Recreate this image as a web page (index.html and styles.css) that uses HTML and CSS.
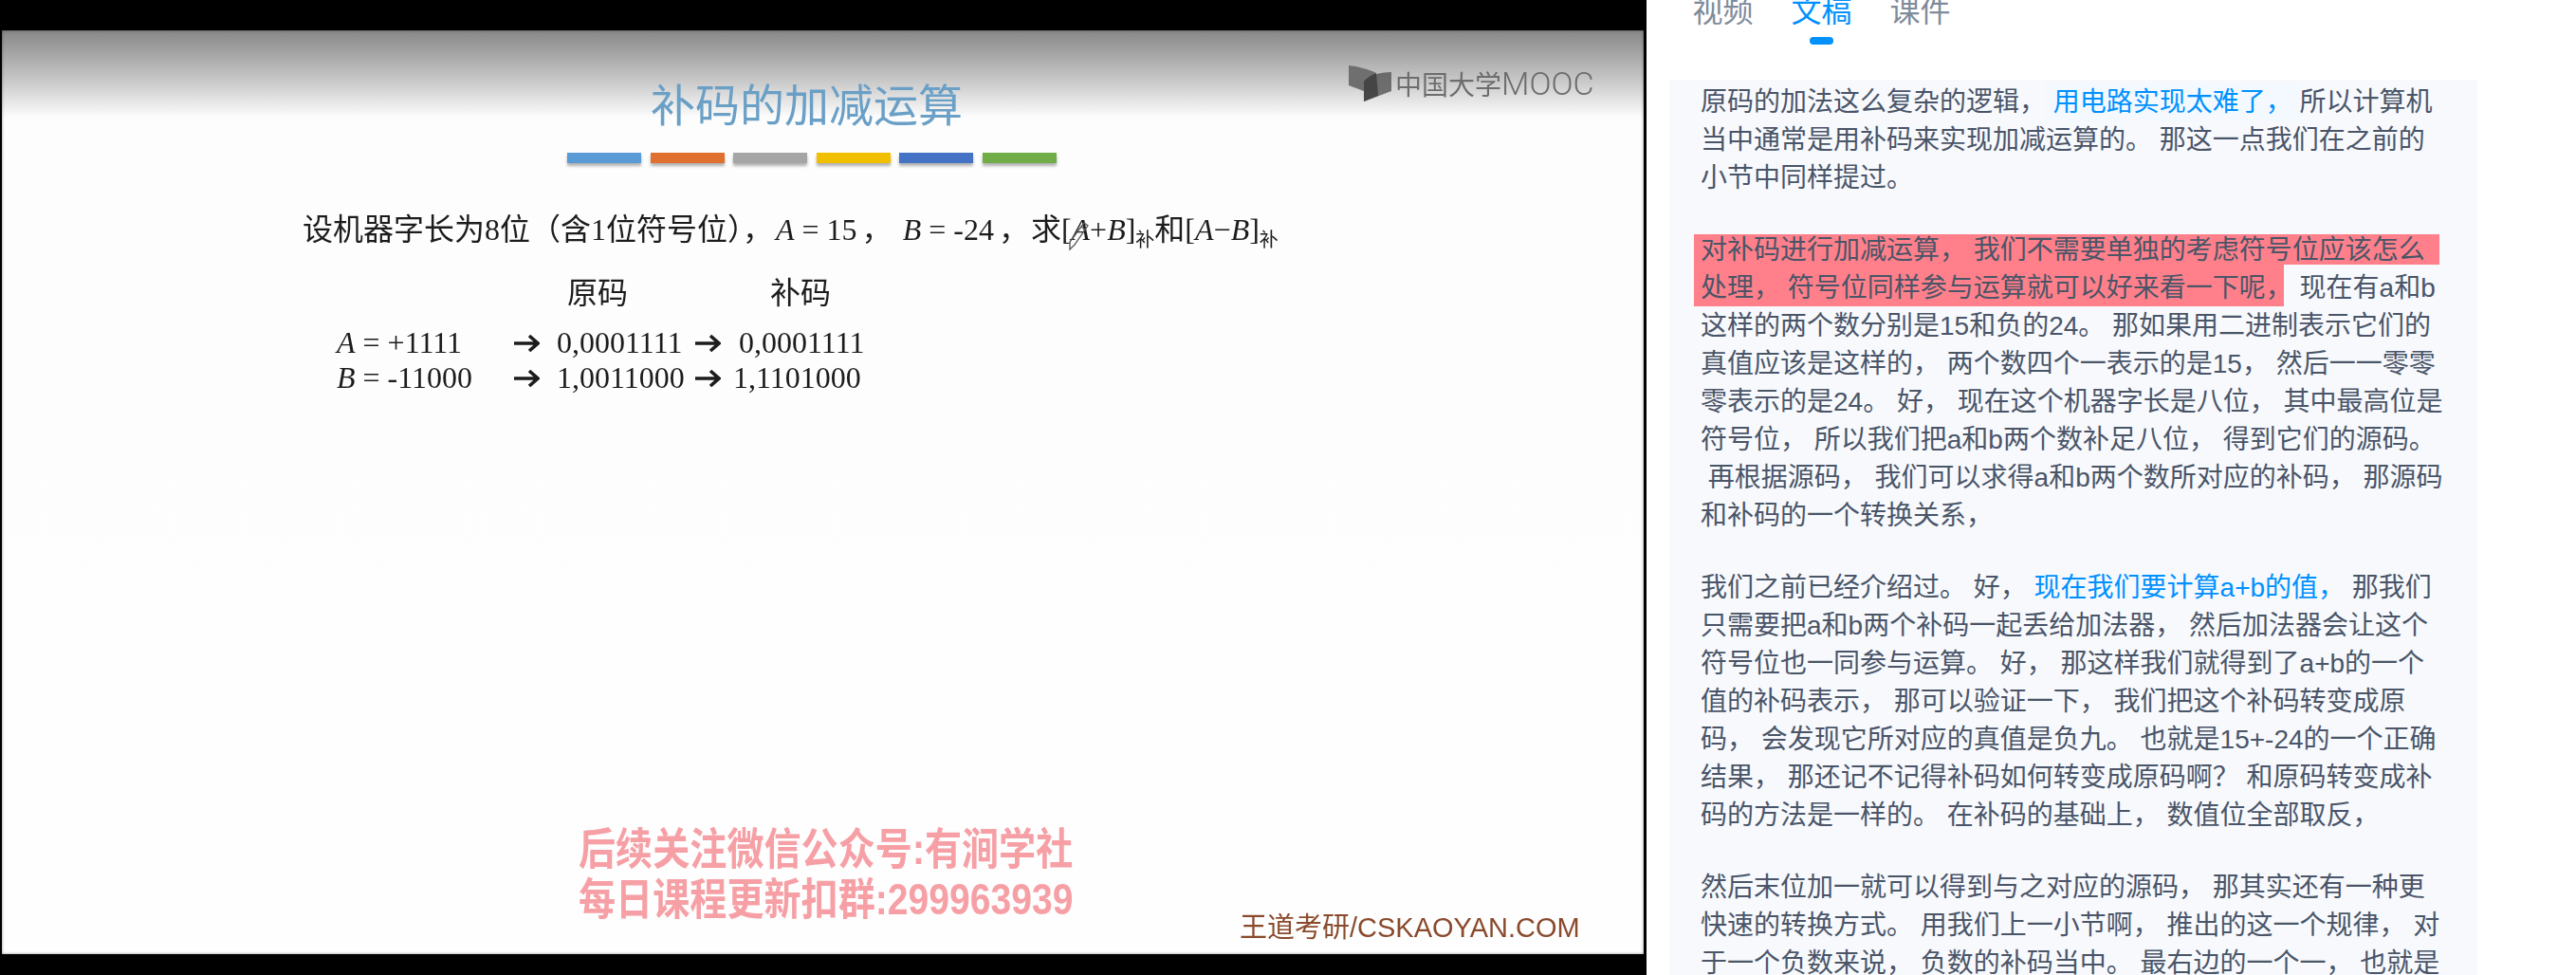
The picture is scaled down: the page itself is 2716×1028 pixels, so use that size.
FILE: index.html
```html
<!DOCTYPE html>
<html lang="zh-CN">
<head>
    <meta charset="UTF-8">
    <meta name="viewport" content="width=device-width, initial-scale=1.0">
    <title>补码的加减运算</title>
    <link rel="stylesheet" href="styles.css">
</head>
<body>
    <div class="page">
        <div class="player">
            <div class="slide">
                <div class="logo">
                    <svg class="logo-icon" width="46" height="38" viewBox="0 0 46 38">
                        <path d="M0 0C10 1 21 4 29 8L31 30L16 27L0 21Z" fill="#6f6f6f"/>
                        <path d="M45 7V27L16 38V17C21 11 32 7 45 7Z" fill="#5c5c5c" fill-opacity="0.85"/>
                        <path d="M16 17C19 13 24 10 29 8L31 32L16 38Z" fill="#3f3f3f" fill-opacity="0.8"/>
                    </svg>
                    <span class="logo-cn">中国大学</span><span class="logo-en">MOOC</span>
                </div>

                <h1 class="slide-title">补码的加减运算</h1>
                <div class="color-bars">
                    <span class="bar bar-blue"></span>
                    <span class="bar bar-orange"></span>
                    <span class="bar bar-gray"></span>
                    <span class="bar bar-yellow"></span>
                    <span class="bar bar-navy"></span>
                    <span class="bar bar-green"></span>
                </div>

                <p class="question">设机器字长为8位（含1位符号位），<i class="var-a">A</i> = 15<span class="comma-a">，</span><i>B</i> = -24<span class="comma-b">，</span>求[<i>A</i>+<i>B</i>]<sub>补</sub>和[<i>A</i>−<i>B</i>]<sub>补</sub></p>

                <div class="code-head">
                    <span class="head-yuan">原码</span>
                    <span class="head-bu">补码</span>
                </div>
                <div class="code-grid">
                    <span><i>A</i> = +1111</span>
                    <svg class="arrow" width="28" height="20" viewBox="0 0 28 20"><path d="M1 10H26M17 2L26 10L17 18"/></svg>
                    <span>0,0001111</span>
                    <svg class="arrow" width="28" height="20" viewBox="0 0 28 20"><path d="M1 10H26M17 2L26 10L17 18"/></svg>
                    <span>0,0001111</span>
                    <span><i>B</i> = -11000</span>
                    <svg class="arrow" width="28" height="20" viewBox="0 0 28 20"><path d="M1 10H26M17 2L26 10L17 18"/></svg>
                    <span>1,0011000</span>
                    <svg class="arrow" width="28" height="20" viewBox="0 0 28 20"><path d="M1 10H26M17 2L26 10L17 18"/></svg>
                    <span class="tight">1,1101000</span>
                </div>

                <svg class="pen" width="24" height="32" viewBox="0 0 24 32">
                    <path d="M18 2L22 5L8 25L3 30L3 22Z" fill="none" stroke="#555" stroke-width="1.3"/>
                    <path d="M15 6L19 9" stroke="#555" stroke-width="1.2"/>
                </svg>

                <div class="notice">
                    <div>后续关注微信公众号:有涧学社</div>
                    <div>每日课程更新扣群:<span class="notice-num">299963939</span></div>
                </div>
                <div class="site-mark">王道考研/CSKAOYAN.COM</div>
            </div>
        </div>

        <div class="side">
            <div class="tabs">
                <div class="tab">视频</div>
                <div class="tab active">文稿</div>
                <div class="tab">课件</div>
            </div>

            <div class="transcript">
                <p>原码的加法这么复杂的逻辑， <span class="mark-blue">用电路实现太难了，</span> 所以计算机<br>
                当中通常是用补码来实现加减运算的。 那这一点我们在之前的<br>
                小节中同样提过。</p>

                <p><span class="mark-red first">对补码进行加减运算， 我们不需要单独的考虑符号位应该怎么</span><br>
                <span class="mark-red second">处理， 符号位同样参与运算就可以好来看一下呢，</span> 现在有a和b<br>
                这样的两个数分别是15和负的24。 那如果用二进制表示它们的<br>
                真值应该是这样的， 两个数四个一表示的是15， 然后一一零零<br>
                零表示的是24。 好， 现在这个机器字长是八位， 其中最高位是<br>
                符号位， 所以我们把a和b两个数补足八位， 得到它们的源码。<br>
                &nbsp;再根据源码， 我们可以求得a和b两个数所对应的补码， 那源码<br>
                和补码的一个转换关系，</p>

                <p>我们之前已经介绍过。 好， <span class="link-blue">现在我们要计算a+b的值，</span> 那我们<br>
                只需要把a和b两个补码一起丢给加法器， 然后加法器会让这个<br>
                符号位也一同参与运算。 好， 那这样我们就得到了a+b的一个<br>
                值的补码表示， 那可以验证一下， 我们把这个补码转变成原<br>
                码， 会发现它所对应的真值是负九。 也就是15+-24的一个正确<br>
                结果， 那还记不记得补码如何转变成原码啊？ 和原码转变成补<br>
                码的方法是一样的。 在补码的基础上， 数值位全部取反，</p>

                <p>然后末位加一就可以得到与之对应的源码， 那其实还有一种更<br>
                快速的转换方式。 用我们上一小节啊， 推出的这一个规律， 对<br>
                于一个负数来说， 负数的补码当中。 最右边的一个一， 也就是</p>
            </div>
        </div>
    </div>
</body>
</html>
```

FILE: styles.css
```css
* {
    margin: 0;
    padding: 0;
    box-sizing: border-box;
}

html, body {
    height: 100%;
    overflow: hidden;
}

body {
    font-family: "Liberation Sans", "Noto Sans CJK SC", sans-serif;
    background-color: white;
}

.page {
    display: flex;
    height: 1028px;
}

/* video frame */
.player {
    width: 1736px;
    flex-shrink: 0;
    background-color: black;
    padding: 32px 3px 22px 2px;
}

.slide {
    position: relative;
    height: 100%;
    overflow: hidden;
    background: linear-gradient(#888888 0, #c4c4c4 50px, #fdfdfd 92px, #fefefe 100%);
    box-shadow: inset 0 0 3px rgba(0, 0, 0, 0.5);
    padding-top: 45px;
    font-family: "Liberation Serif", "Noto Sans CJK SC", serif;
    color: #1c1c1c;
}

.slide-title {
    margin-left: 684px;
    font-family: "Noto Sans CJK SC", sans-serif;
    font-size: 47px;
    line-height: 62px;
    font-weight: 400;
    color: #6a9fc6;
    filter: blur(0.5px);
}

.color-bars {
    display: flex;
    gap: 9.6px;
    margin: 22px 0 0 596px;
}

.bar {
    width: 78px;
    height: 11px;
    box-shadow: 0 3px 3px rgba(0, 0, 0, 0.3);
}

.bar-blue { background-color: #5b9bd5; }
.bar-orange { background-color: #df7030; }
.bar-gray { background-color: #a5a5a5; }
.bar-yellow { background-color: #f0c000; }
.bar-navy { background-color: #4472c4; }
.bar-green { background-color: #70ad47; }

.question {
    margin: 50px 0 0 317px;
    font-size: 32px;
    line-height: 40px;
    white-space: nowrap;
    filter: blur(0.5px);
}

.question sub {
    font-size: 20px;
    line-height: 0;
}

.var-a {
    margin-left: 3px;
}

.comma-a {
    margin: 0 11px 0 5px;
}

.comma-b {
    margin: 0 2px 0 5px;
}

.code-head {
    display: flex;
    margin: 27px 0 0 596px;
    font-size: 32px;
    line-height: 40px;
    filter: blur(0.5px);
}

.head-yuan {
    width: 214px;
}

.code-grid {
    display: grid;
    grid-template-columns: 186px 46px 145px 47px auto;
    grid-auto-rows: 37px;
    align-items: center;
    margin: 14px 0 0 353px;
    font-size: 32px;
    line-height: 37px;
    white-space: nowrap;
    filter: blur(0.4px);
}

.arrow {
    fill: none;
    stroke: #1c1c1c;
    stroke-width: 3.6;
}

.tight {
    margin-left: -6px;
}

.pen {
    position: absolute;
    left: 1123px;
    top: 201px;
}

/* overlays on the slide */
.logo {
    position: absolute;
    left: 1420px;
    top: 37px;
    display: flex;
    align-items: center;
    color: #6d6d6d;
    line-height: 38px;
    filter: blur(0.4px);
}

.logo-icon {
    margin-right: 3px;
}

.logo-cn {
    font-family: "Noto Sans CJK SC", sans-serif;
    font-size: 28px;
}

.logo-en {
    font-family: "Roboto", sans-serif;
    font-size: 34px;
    font-weight: 300;
}

.notice {
    position: absolute;
    left: 608px;
    top: 837px;
    font-family: "Liberation Sans", "Noto Sans CJK SC", sans-serif;
    font-size: 46px;
    line-height: 53px;
    font-weight: 700;
    color: #f6a0a6;
    white-space: nowrap;
    transform: scaleX(0.85);
    transform-origin: left top;
    filter: blur(0.5px);
}

.site-mark {
    position: absolute;
    left: 1305px;
    top: 930px;
    font-family: "Liberation Sans", "Noto Sans CJK SC", sans-serif;
    font-size: 29px;
    line-height: 32px;
    color: #8a4a2c;
    white-space: nowrap;
    filter: blur(0.4px);
}

/* right column */
.side {
    flex: 1;
    min-width: 0;
    padding-left: 24px;
}

.tabs {
    display: flex;
    gap: 40px;
    height: 84px;
    padding-left: 24.5px;
    overflow: hidden;
}

.tab {
    position: relative;
    margin-top: -8px;
    height: 55px;
    font-size: 32px;
    line-height: 40px;
    color: #7f8b9b;
}

.tab.active {
    color: #0091ff;
}

.tab.active::after {
    content: "";
    position: absolute;
    left: 19px;
    bottom: 0;
    width: 25px;
    height: 8px;
    border-radius: 4px;
    background-color: #0091ff;
}

.transcript {
    width: 852px;
    height: 944px;
    overflow: hidden;
    padding: 4px 0 0 33px;
    background-color: #f7f9fd;
    font-size: 28px;
    line-height: 40px;
    color: #4a5568;
    white-space: nowrap;
}

.transcript p {
    margin-bottom: 36px;
}

.mark-blue {
    padding: 5px 9px;
    margin: 0 -9px;
    background-color: #f3f9ff;
    color: #0091ff;
}

.link-blue {
    color: #0091ff;
}

.mark-red {
    padding: 0 7px;
    margin-left: -7px;
    background-color: #ff808a;
}

.mark-red.first {
    padding: 1px 15px 0 7px;
}

/* red stops a little before the comma's cell ends */
.mark-red.second {
    padding: 9px 0 4px 7px;
    background: linear-gradient(#ff808a, #ff808a) no-repeat left top / calc(100% - 9px) 100%;
}
```
